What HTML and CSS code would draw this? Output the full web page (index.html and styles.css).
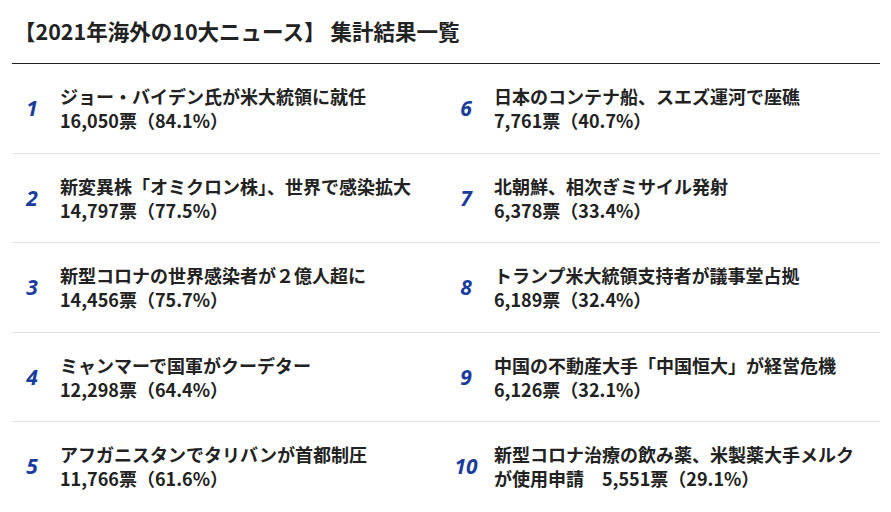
FILE: index.html
```html
<!DOCTYPE html>
<html lang="ja">
<head>
<meta charset="utf-8">
<link rel="stylesheet" href="styles.css">
</head>
<body>
<div class="page">
  <h1 class="title">【2021年海外の10大ニュース】 集計結果一覧</h1>
  <ol class="ranking">
    <li class="item"><span class="num">1</span><p class="text">ジョー・バイデン氏が米大統領に就任<br>16,050票（84.1%）</p></li>
    <li class="item"><span class="num">6</span><p class="text">日本のコンテナ船、スエズ運河で座礁<br>7,761票（40.7%）</p></li>
    <li class="item"><span class="num">2</span><p class="text">新変異株「オミクロン株」、世界で感染拡大<br>14,797票（77.5%）</p></li>
    <li class="item"><span class="num">7</span><p class="text">北朝鮮、相次ぎミサイル発射<br>6,378票（33.4%）</p></li>
    <li class="item"><span class="num">3</span><p class="text">新型コロナの世界感染者が２億人超に<br>14,456票（75.7%）</p></li>
    <li class="item"><span class="num">8</span><p class="text">トランプ米大統領支持者が議事堂占拠<br>6,189票（32.4%）</p></li>
    <li class="item"><span class="num">4</span><p class="text">ミャンマーで国軍がクーデター<br>12,298票（64.4%）</p></li>
    <li class="item"><span class="num">9</span><p class="text">中国の不動産大手「中国恒大」が経営危機<br>6,126票（32.1%）</p></li>
    <li class="item last"><span class="num">5</span><p class="text">アフガニスタンでタリバンが首都制圧<br>11,766票（61.6%）</p></li>
    <li class="item last"><span class="num">10</span><p class="text">新型コロナ治療の飲み薬、米製薬大手メルクが使用申請　5,551票（29.1%）</p></li>
  </ol>
</div>
</body>
</html>
```
FILE: styles.css
```css
html, body {
  margin: 0;
  padding: 0;
  background: #ffffff;
}
body {
  font-family: "Noto Sans CJK JP", "Noto Sans", sans-serif;
  color: #222222;
}
.page {
  width: 868px;
  margin-left: 12px;
}
.title {
  margin: 0;
  height: 64px;
  box-sizing: border-box;
  display: flex;
  align-items: center;
  padding: 0 0 1px 2px;
  font-size: 21.5px;
  font-weight: 700;
  line-height: 1;
  border-bottom: 1px solid #222222;
}
.ranking {
  list-style: none;
  margin: 0;
  padding: 0;
  display: grid;
  grid-template-columns: 434px 434px;
}
.item {
  height: 89.5px;
  box-sizing: border-box;
  border-bottom: 1px solid #e4e4e4;
  display: flex;
  align-items: center;
  padding-right: 16px;
}
.item.last {
  border-bottom-color: transparent;
}
.num {
  width: 40px;
  margin-right: 8px;
  text-align: center;
  font-family: "Open Sans", "DejaVu Sans", sans-serif;
  font-style: italic;
  font-weight: 700;
  font-size: 21px;
  color: #1a3c9c;
}
.text {
  margin: 0;
  flex: 1;
  font-size: 18px;
  font-weight: 700;
  line-height: 24px;
}
```
